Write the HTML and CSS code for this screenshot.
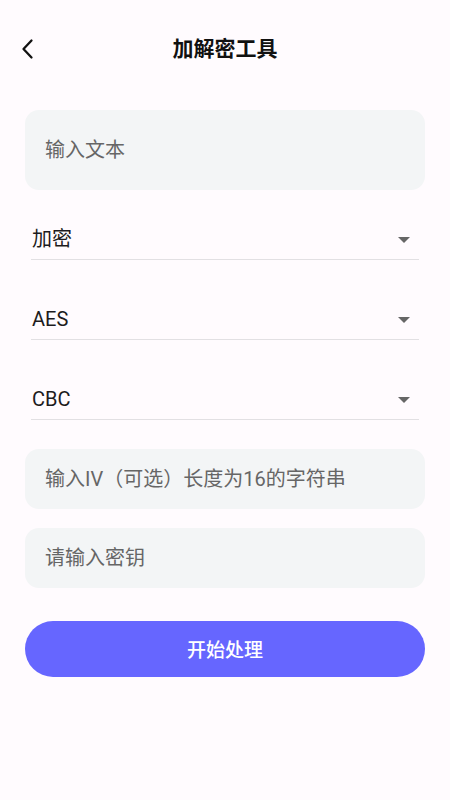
FILE: index.html
```html
<!DOCTYPE html>
<html lang="zh-CN">
<head>
    <meta charset="UTF-8">
    <meta name="viewport" content="width=device-width, initial-scale=1.0">
    <title>加解密工具</title>
    <link rel="stylesheet" href="styles.css">
</head>
<body>
    <div class="app-bar">
        <button class="back-btn" aria-label="返回">
            <svg width="24" height="24" viewBox="0 0 24 24">
                <path d="M15.5 3.5 L7.5 12 L15.5 20.5" fill="none" stroke="#111" stroke-width="2.3" stroke-linecap="round" stroke-linejoin="round"/>
            </svg>
        </button>
        <h1 class="title">加解密工具</h1>
    </div>

    <div class="form">
        <div class="field field-text">
            <span class="placeholder">输入文本</span>
        </div>

        <div class="select first">
            <span class="select-value">加密</span>
            <svg class="arrow" width="14" height="8" viewBox="0 0 14 8"><path d="M1 1 L13 1 L7 7 Z" fill="#666"/></svg>
        </div>
        <div class="select">
            <span class="select-value">AES</span>
            <svg class="arrow" width="14" height="8" viewBox="0 0 14 8"><path d="M1 1 L13 1 L7 7 Z" fill="#666"/></svg>
        </div>
        <div class="select">
            <span class="select-value">CBC</span>
            <svg class="arrow" width="14" height="8" viewBox="0 0 14 8"><path d="M1 1 L13 1 L7 7 Z" fill="#666"/></svg>
        </div>

        <div class="field field-iv">
            <span class="placeholder">输入IV（可选）长度为16的字符串</span>
        </div>
        <div class="field field-key">
            <span class="placeholder">请输入密钥</span>
        </div>

        <button class="submit">开始处理</button>
    </div>
</body>
</html>
```

FILE: styles.css
```css
* {
    margin: 0;
    padding: 0;
    box-sizing: border-box;
}

body {
    width: 450px;
    height: 800px;
    background: #fffbfe;
    font-family: Roboto, "Noto Sans CJK SC", sans-serif;
    color: #1d1b20;
    overflow: hidden;
}

.app-bar {
    height: 100px;
    display: flex;
    align-items: center;
    justify-content: center;
    position: relative;
    padding-bottom: 2px;
}

.back-btn {
    position: absolute;
    left: 16px;
    top: 37px;
    width: 24px;
    height: 24px;
    border: none;
    background: none;
    display: flex;
}

.title {
    font-size: 21px;
    font-weight: 700;
    color: #111;
    line-height: 1;
    margin-top: 0;
}

.form {
    padding: 10px 25px 0;
    display: flex;
    flex-direction: column;
}

.field {
    background: #f3f5f6;
    border-radius: 14px;
    display: flex;
    align-items: center;
    padding: 0 20px;
}

.field-text {
    height: 80px;
}

.field-iv {
    height: 60px;
    margin-top: 29px;
}

.field-key {
    height: 60px;
    margin-top: 19px;
}

.placeholder {
    font-size: 20px;
    line-height: 1;
    color: #666;
}

.select {
    margin: 40px 6px 0;
    height: 40px;
    display: flex;
    align-items: center;
    justify-content: space-between;
    border-bottom: 1px solid #e2e0e3;
    padding: 0 8px 1px 1px;
}

.select.first {
    margin-top: 30px;
}

.select-value {
    font-size: 20px;
    line-height: 1;
    color: #1d1b20;
}

.arrow {
    margin-top: 2px;
}

.submit {
    margin-top: 33px;
    height: 56px;
    border: none;
    border-radius: 28px;
    background: #6666ff;
    color: #fff;
    font-family: Roboto, "Noto Sans CJK SC", sans-serif;
    font-size: 19px;
    font-weight: 500;
    padding-bottom: 2px;
}
```
